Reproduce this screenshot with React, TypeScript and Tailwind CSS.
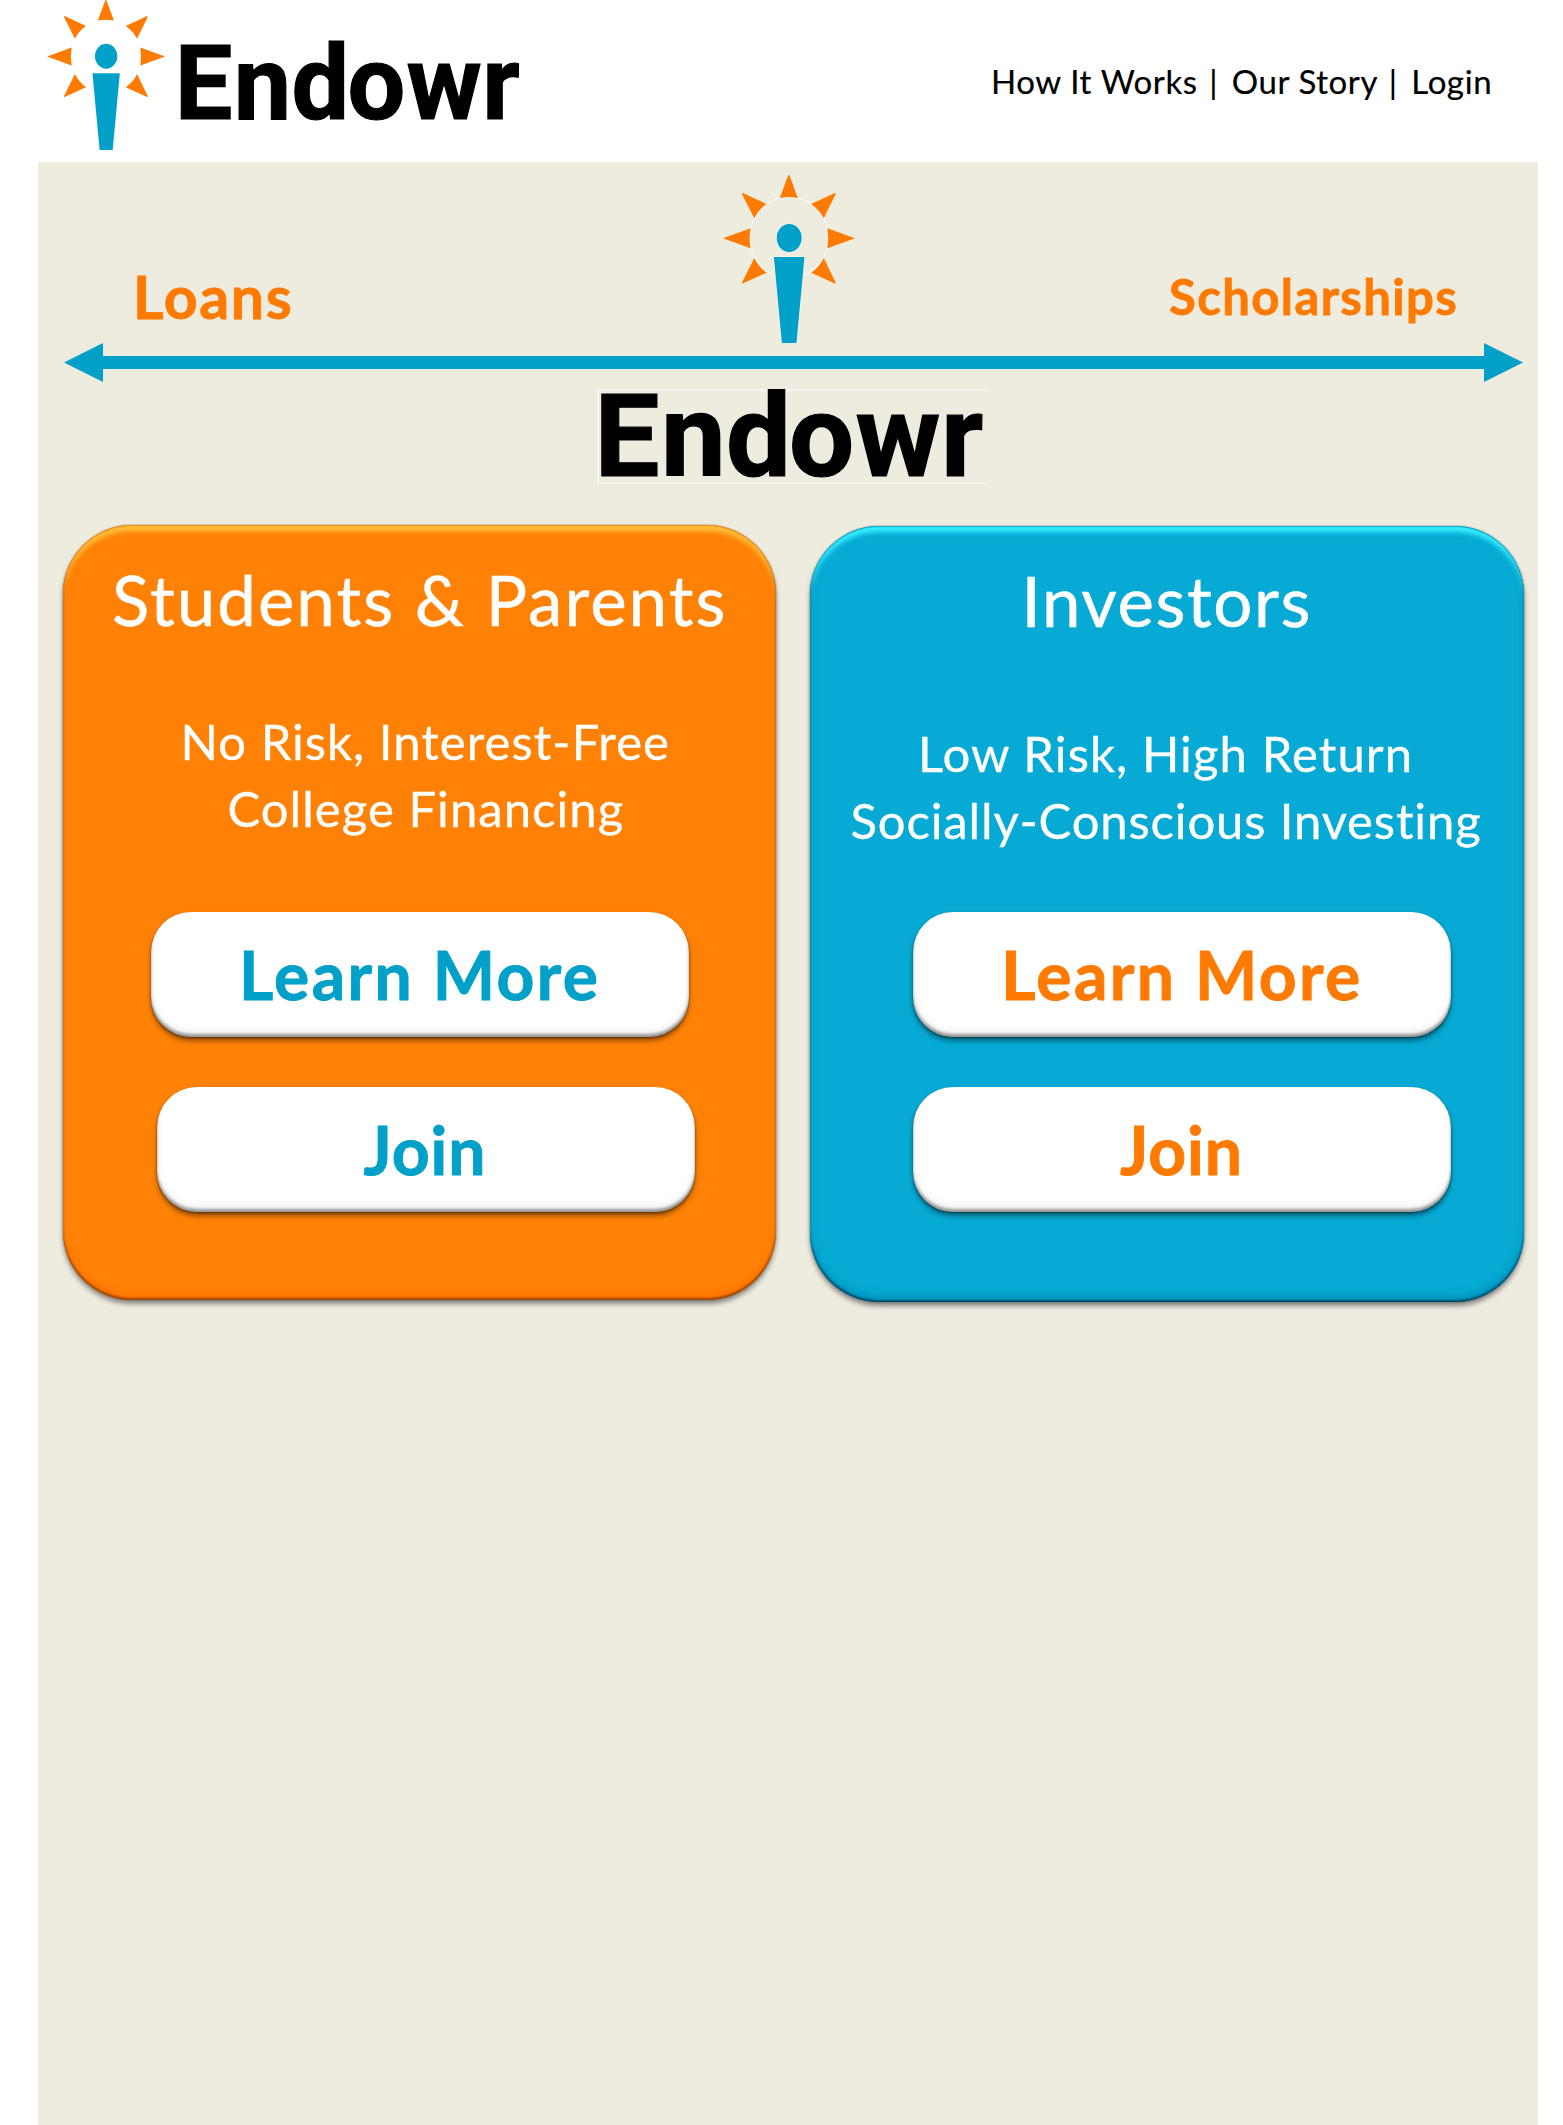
import type { ReactNode } from 'react'

function Beacon({ className, halo = false }: { className: string; halo?: boolean }) {
  return (
    <svg className={className} viewBox="429 45 397 504" preserveAspectRatio="none" aria-hidden="true">
      {halo && (
        <g fill="none" stroke="#f8f7f2" strokeWidth="4">
          <path d="M584 347A118 123 0 1 1 671 347" />
          <ellipse cx="628" cy="234" rx="38" ry="42" />
          <path d="M582 291H674L650 549H606Z" />
        </g>
      )}
      <g fill="#ff7a00">
        <path d="M627 45Q629 45 630 49L654 114Q627 108 600 114L624 49Q625 45 627 45Z" />
        <path d="M486 99L490 100L560 132Q535 150 523 175L487 104Z" />
        <path d="M768 99L764 100L694 132Q719 150 732 175L767 104Z" />
        <path d="M429 235L512 205Q506 235 512 265Z" />
        <path d="M826 235L743 205Q748 235 743 265Z" />
        <path d="M486 371L487 366L523 294Q537 322 560 338L490 370Z" />
        <path d="M768 371L767 366L732 294Q719 322 694 338L764 370Z" />
      </g>
      <g fill="#00a0c8">
        <ellipse cx="628" cy="234" rx="37.5" ry="42" />
        <path d="M582 291H674L650 549H606Z" />
      </g>
    </svg>
  )
}

function Wordmark({ className, framed = false }: { className: string; framed?: boolean }) {
  return (
    <svg className={className} viewBox="0 0 391 95" preserveAspectRatio="none">
      {framed && <path d="M391 1H1V94H391" fill="none" stroke="#f8f7f2" strokeWidth="1.6" />}
      <text
        x="-2.5 64 129 192 258.5 344"
        y="87"
        fontSize="115.5"
        stroke="#000"
        strokeWidth="1.2"
        className="fill-black font-['Roboto',sans-serif] font-bold"
      >
        Endowr
      </text>
    </svg>
  )
}

function PillButton({ className, children }: { className: string; children: ReactNode }) {
  return (
    <button
      className={`flex h-[125.5px] items-center justify-center rounded-[40px] bg-white pt-px text-[66px] leading-none font-bold [-webkit-text-stroke:0.9px_currentColor] shadow-[0_4px_5px_rgba(0,0,0,0.42),0_1px_2px_rgba(0,0,0,0.4),inset_0_-3px_3px_rgba(0,0,0,0.38),inset_0_-6px_8px_rgba(0,0,0,0.06)] ${className}`}
    >
      {children}
    </button>
  )
}

export default function App() {
  return (
    <div className="flex h-[2125px] w-[1563px] flex-col overflow-hidden bg-white font-['Lato',sans-serif] whitespace-nowrap">
      <header className="flex h-[162px] shrink-0 items-start">
        <Beacon className="ml-[46.5px] h-[150px] w-[118px] shrink-0" />
        <Wordmark className="mt-[40.5px] ml-[12.5px] h-[85px] w-[347px] shrink-0 overflow-visible" />
        <nav className="mt-[65px] ml-[467px] text-[33px] leading-none tracking-[0.6px] text-black [-webkit-text-stroke:0.2px_currentColor]">
          <a>How It Works</a> <span className="mr-[4.5px] ml-[2.5px]">|</span> <a>Our Story</a> <span className="mr-[4.5px] ml-[2.5px]">|</span> <a>Login</a>
        </nav>
      </header>

      <main className="mr-[25px] ml-[38px] flex-1 bg-[#eeebdf]">
        <section className="flex h-[181px] items-start text-[#ff7a00] [-webkit-text-stroke:0.8px_currentColor]">
          <h2 className="mt-[105px] w-[628px] pl-[95px] text-[59px] leading-none font-bold tracking-[1.6px]">Loans</h2>
          <Beacon halo className="mt-[13px] ml-[57px] h-[168px] w-[132px] shrink-0" />
          <h2 className="mt-[109.5px] ml-[314px] text-[49px] leading-none font-bold tracking-[1.4px]">Scholarships</h2>
        </section>

        <svg className="ml-[25.5px] block h-[39px] w-[1459px]" viewBox="0 0 1459 39" fill="#00a0c8" aria-hidden="true">
          <path d="M0 19.5L39 0V13H1420V0L1459 19.5L1420 39V26H39V39Z" />
        </svg>

        <Wordmark framed className="mt-[7px] ml-[559px] h-[95px] w-[391px] overflow-visible" />

        <section className="mt-[41px] ml-[25px] flex items-start gap-[34px] text-white">
          <article className="h-[775px] w-[713px] rounded-[69px] bg-[#ff8206] pt-[40px] shadow-[0_4px_5px_rgba(0,0,0,0.42),0_0_2px_rgba(0,0,0,0.4),inset_0_1px_1px_#f4860c,inset_0_-2px_2px_rgba(130,60,0,0.7),inset_0_7px_5px_-1px_#ffc23e,inset_0_0_3px_rgba(120,50,0,0.8),inset_0_-6px_9px_#ff7200]">
            <h1 className="pl-[49px] text-[69px] leading-none tracking-[2.04px] [-webkit-text-stroke:0.5px_currentColor]">Students &amp; Parents</h1>
            <p className="mt-[73.5px] pl-[117.5px] text-[49px] leading-[67px] tracking-[1.05px] [-webkit-text-stroke:0.3px_currentColor]">No Risk, Interest-Free</p>
            <p className="pl-[164.5px] text-[49px] leading-[67px] tracking-[1.05px] [-webkit-text-stroke:0.3px_currentColor]">College Financing</p>
            <div className="mt-[70px] flex flex-col gap-[49.5px] text-[#00a0c8]">
              <PillButton className="ml-[88px] w-[537.5px] tracking-[2.4px]">Learn More</PillButton>
              <PillButton className="ml-[94px] w-[538px] pr-[2px] tracking-[1px]">Join</PillButton>
            </div>
          </article>

          <article className="mt-px h-[775.5px] w-[714px] rounded-[69px] bg-[#06aad4] pt-[40px] shadow-[0_4px_5px_rgba(0,0,0,0.42),0_0_2px_rgba(0,0,0,0.4),inset_0_1px_1px_#08a4cc,inset_0_-2px_2px_rgba(0,60,85,0.7),inset_0_7px_5px_-1px_#3af0ff,inset_0_0_3px_rgba(0,50,80,0.8),inset_0_-6px_9px_#0092bc]">
            <h1 className="pl-[211.5px] text-[69px] leading-none tracking-[1.6px] [-webkit-text-stroke:0.5px_currentColor]">Investors</h1>
            <p className="mt-[84.5px] pl-[108px] text-[49px] leading-[67px] tracking-[1.12px] [-webkit-text-stroke:0.3px_currentColor]">Low Risk, High Return</p>
            <p className="pl-[40.5px] text-[49px] leading-[67px] tracking-[0.86px] [-webkit-text-stroke:0.3px_currentColor]">Socially-Conscious Investing</p>
            <div className="mt-[58px] flex flex-col gap-[49.5px] text-[#ff7a00]">
              <PillButton className="ml-[103px] w-[538px] tracking-[2.4px]">Learn More</PillButton>
              <PillButton className="ml-[103px] w-[538px] pr-px tracking-[1px]">Join</PillButton>
            </div>
          </article>
        </section>
      </main>
    </div>
  )
}
